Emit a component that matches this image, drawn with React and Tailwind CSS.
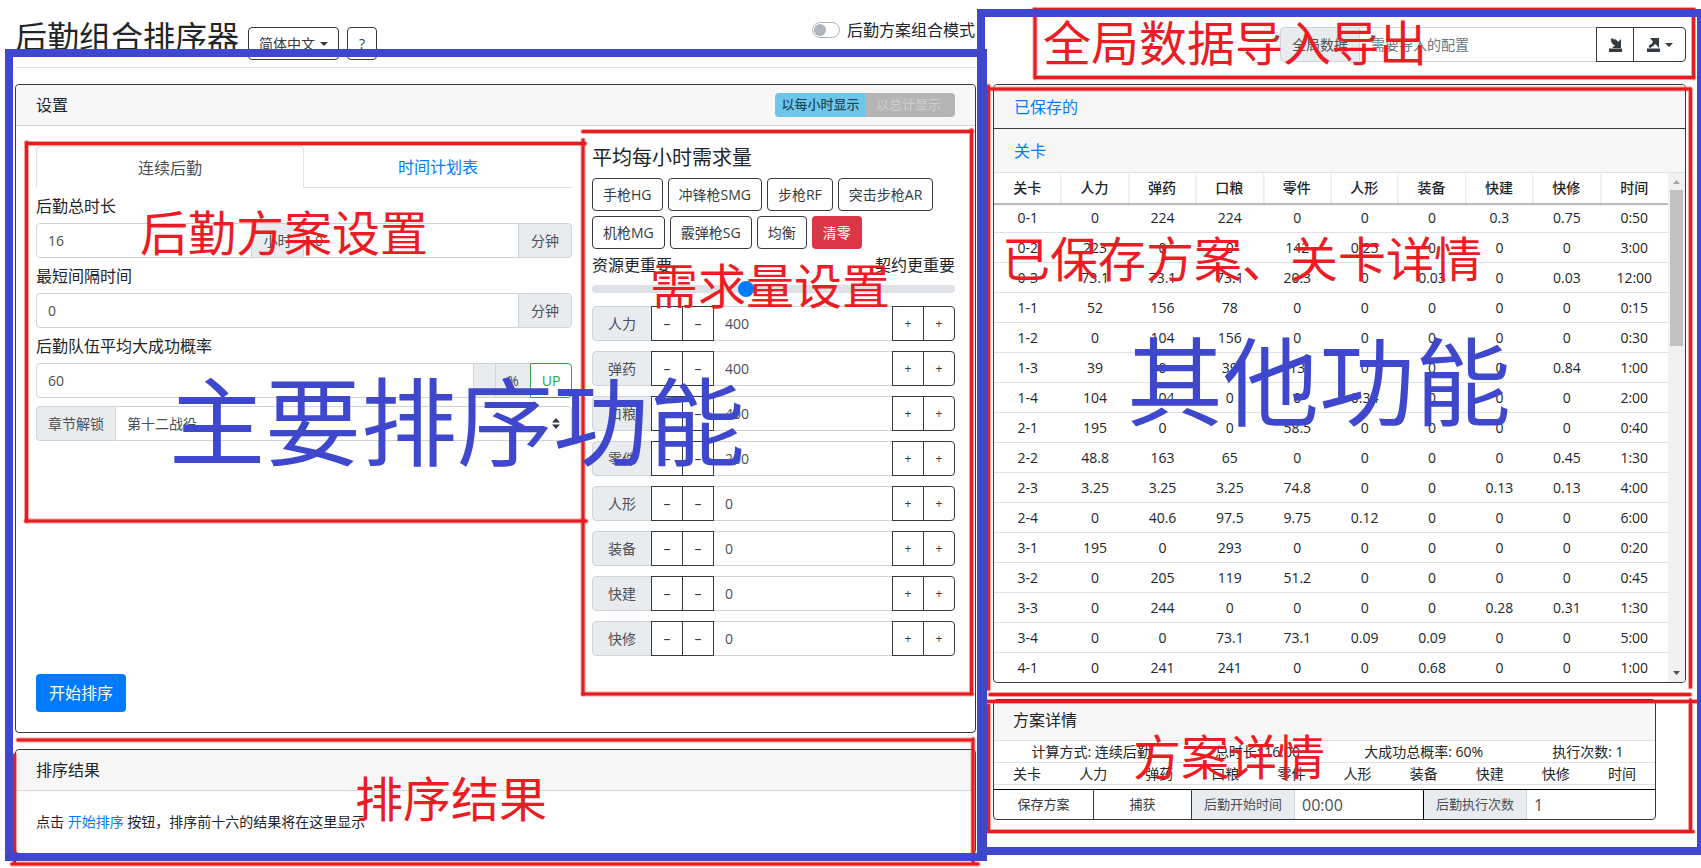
import React from "react";

const INK = "border-[#343a40]";

const demands = [
  ["人力", 400],
  ["弹药", 400],
  ["口粮", 400],
  ["零件", 200],
  ["人形", 0],
  ["装备", 0],
  ["快建", 0],
  ["快修", 0],
];

const columns = ["关卡", "人力", "弹药", "口粮", "零件", "人形", "装备", "快建", "快修", "时间"];

const stages = [
  ["0-1", "0", "224", "224", "0", "0", "0", "0.3", "0.75", "0:50"],
  ["0-2", "223", "0", "0", "142", "0.25", "0", "0", "0", "3:00"],
  ["0-3", "73.1", "73.1", "73.1", "20.3", "0", "0.03", "0", "0.03", "12:00"],
  ["1-1", "52", "156", "78", "0", "0", "0", "0", "0", "0:15"],
  ["1-2", "0", "104", "156", "0", "0", "0", "0", "0", "0:30"],
  ["1-3", "39", "0", "39", "13", "0", "0", "0", "0.84", "1:00"],
  ["1-4", "104", "104", "0", "0", "0.34", "0", "0", "0", "2:00"],
  ["2-1", "195", "0", "0", "58.5", "0", "0", "0", "0", "0:40"],
  ["2-2", "48.8", "163", "65", "0", "0", "0", "0", "0.45", "1:30"],
  ["2-3", "3.25", "3.25", "3.25", "74.8", "0", "0", "0.13", "0.13", "4:00"],
  ["2-4", "0", "40.6", "97.5", "9.75", "0.12", "0", "0", "0", "6:00"],
  ["3-1", "195", "0", "293", "0", "0", "0", "0", "0", "0:20"],
  ["3-2", "0", "205", "119", "51.2", "0", "0", "0", "0", "0:45"],
  ["3-3", "0", "244", "0", "0", "0", "0", "0.28", "0.31", "1:30"],
  ["3-4", "0", "0", "73.1", "73.1", "0.09", "0.09", "0", "0", "5:00"],
  ["4-1", "0", "241", "241", "0", "0", "0.68", "0", "0", "1:00"],
];

function Caret() {
  return (
    <svg width="8" height="4" viewBox="0 0 8 4" aria-hidden="true">
      <path d="M0 0h8L4 4z" fill="currentColor" />
    </svg>
  );
}

function Addon({ htmlFor, className = "", children }) {
  return (
    <label
      htmlFor={htmlFor}
      className={`flex shrink-0 items-center justify-center border border-[#ced4da] bg-[#e9ecef] text-sm text-[#495057] ${className}`}
    >
      {children}
    </label>
  );
}

function Field({ id, className = "", ...rest }) {
  return (
    <input
      id={id}
      className={`h-[35px] w-0 min-w-0 flex-1 border border-[#ced4da] bg-white px-[11px] text-sm text-[#495057] placeholder:text-[#6c757d] ${className}`}
      {...rest}
    />
  );
}

function OutlineButton({ className = "px-[10px]", children }) {
  return (
    <button type="button" className={`h-[33px] rounded border ${INK} text-sm text-[#343a40] ${className}`}>
      {children}
    </button>
  );
}

function StepButton({ label, className = "", children }) {
  return (
    <button type="button" aria-label={label} className={`w-8 shrink-0 border ${INK} bg-white text-[#343a40] ${className}`}>
      {children}
    </button>
  );
}

function PageHeader() {
  return (
    <header className="flex h-[68px] justify-between border-b border-[#e5e5e5]">
      <div className="flex items-start gap-[9px] pt-[18px]">
        <h1 className="text-[32px] leading-[38px] text-[#212529]">后勤组合排序器</h1>
        <div className="flex gap-2 pt-[9px]">
          <OutlineButton className="flex items-center gap-[5px] px-[10px]">
            简体中文
            <Caret />
          </OutlineButton>
          <OutlineButton className="px-[11px]">?</OutlineButton>
        </div>
      </div>
      <label className="mt-[18px] flex h-6 items-center gap-[7px] self-start pr-px text-base text-[#212529]">
        <input type="checkbox" className="peer sr-only" />
        <span className="flex h-4 w-7 items-center rounded-full border border-[#adb5bd] px-px">
          <span className="size-3 rounded-full bg-[#adb5bd]" />
        </span>
        后勤方案组合模式
      </label>
    </header>
  );
}

function PlanForm() {
  return (
    <form className="flex min-w-0 flex-col justify-between" onSubmit={(e) => e.preventDefault()}>
      <div>
        <div role="tablist" className="grid h-[42px] grid-cols-2">
          <button type="button" role="tab" aria-selected="true" className="rounded-t border border-b-0 border-[#dee2e6] text-base text-[#495057]">
            连续后勤
          </button>
          <button type="button" role="tab" aria-selected="false" className="border-b border-[#dee2e6] text-base text-[#007bff]">
            时间计划表
          </button>
        </div>

        <label htmlFor="hours" className="mt-[6px] mb-[5px] block leading-6">后勤总时长</label>
        <div className="flex">
          <Field id="hours" defaultValue="16" className="rounded-l" />
          <Addon htmlFor="hours" className="-ml-px w-[53px]">小时</Addon>
          <Field id="minutes" aria-label="分钟" defaultValue="0" className="-ml-px" />
          <Addon htmlFor="minutes" className="-ml-px w-[54px] rounded-r">分钟</Addon>
        </div>

        <label htmlFor="interval" className="mt-[6px] mb-[5px] block leading-6">最短间隔时间</label>
        <div className="flex">
          <Field id="interval" defaultValue="0" className="rounded-l" />
          <Addon htmlFor="interval" className="-ml-px w-[54px] rounded-r">分钟</Addon>
        </div>

        <label htmlFor="rate" className="mt-[6px] mb-[5px] block leading-6">后勤队伍平均大成功概率</label>
        <div className="flex">
          <Field id="rate" defaultValue="60" className="rounded-l" />
          <span className="-ml-px w-[23px] border border-[#ced4da] bg-[#e9ecef]" />
          <Addon htmlFor="rate" className="-ml-px w-9">%</Addon>
          <button type="button" className="-ml-px w-[42px] rounded-r border border-[#28a745] bg-white text-sm text-[#28a745]">UP</button>
        </div>

        <div className="mt-2 flex">
          <Addon htmlFor="chapter" className="w-20 rounded-l">章节解锁</Addon>
          <div className="relative -ml-px flex-1">
            <select id="chapter" className="h-[35px] w-full appearance-none rounded-r border border-[#ced4da] bg-white px-[11px] text-sm text-[#495057]">
              <option>第十二战役</option>
            </select>
            <svg className="pointer-events-none absolute right-3 top-3" width="8" height="11" viewBox="0 0 8 11" aria-hidden="true">
              <path d="M0 4.5 4 0l4 4.5zM0 6.5 4 11l4-4.500z" fill="#343a40" />
            </svg>
          </div>
        </div>
      </div>
      <button type="button" className="h-[38px] self-start rounded bg-[#007bff] px-[13px] text-base text-white">开始排序</button>
    </form>
  );
}

function DemandForm() {
  return (
    <form className="min-w-0" onSubmit={(e) => e.preventDefault()}>
      <h2 className="mb-2 text-xl leading-6">平均每小时需求量</h2>
      <div className="flex flex-wrap gap-[5px]">
        {["手枪HG", "冲锋枪SMG", "步枪RF", "突击步枪AR", "机枪MG", "霰弹枪SG", "均衡"].map((name) => (
          <OutlineButton key={name}>{name}</OutlineButton>
        ))}
        <button type="button" className="h-[33px] rounded bg-[#dc3545] px-[11px] text-sm text-white">清零</button>
      </div>
      <div className="mt-1 flex justify-between leading-6">
        <label htmlFor="priority">资源更重要</label>
        <span>契约更重要</span>
      </div>
      <input
        id="priority"
        type="range"
        min="0"
        max="100"
        defaultValue="42"
        className="block h-6 w-full appearance-none bg-transparent [&::-webkit-slider-runnable-track]:h-2 [&::-webkit-slider-runnable-track]:rounded-full [&::-webkit-slider-runnable-track]:bg-[#dee2e6] [&::-webkit-slider-thumb]:-mt-1 [&::-webkit-slider-thumb]:size-4 [&::-webkit-slider-thumb]:appearance-none [&::-webkit-slider-thumb]:rounded-full [&::-webkit-slider-thumb]:bg-[#007bff]"
      />
      <div className="mt-[5px] flex flex-col gap-[10px]">
        {demands.map(([name, value], i) => (
          <div key={name} className="flex">
            <Addon htmlFor={`demand-${i}`} className="w-[60px] rounded-l">{name}</Addon>
            <StepButton label={`${name} 大减`} className="-ml-px text-sm">–</StepButton>
            <StepButton label={`${name} 减`} className="-ml-px text-sm">–</StepButton>
            <Field id={`demand-${i}`} defaultValue={value} className="border-x-0" />
            <StepButton label={`${name} 加`} className="text-xs">+</StepButton>
            <StepButton label={`${name} 大加`} className="-ml-px rounded-r text-xs">+</StepButton>
          </div>
        ))}
      </div>
    </form>
  );
}

function SettingsCard() {
  return (
    <section className={`mt-4 rounded border ${INK}`}>
      <div className="flex h-[41px] items-center justify-between rounded-t border-b border-[#d5d6d7] bg-[#f7f7f7] px-5">
        <h2>设置</h2>
        <div className="flex h-6 overflow-hidden rounded text-[13px]">
          <button type="button" className="w-[91px] bg-[#6fc6eb] font-medium text-[#1e4a5c]">以每小时显示</button>
          <button type="button" className="w-[89px] bg-[#b5b5b5] pr-1 text-[#cfcfcf]">以总计显示</button>
        </div>
      </div>
      <div className="grid min-h-[606px] grid-cols-[536fr_363fr] gap-5 p-5">
        <PlanForm />
        <DemandForm />
      </div>
    </section>
  );
}

function ResultsCard() {
  return (
    <section className={`mt-4 rounded border ${INK}`}>
      <h2 className="flex h-[41px] items-center rounded-t border-b border-[#d5d6d7] bg-[#f7f7f7] px-5">排序结果</h2>
      <p className="px-5 py-5 text-sm leading-[22px]">
        点击 <a href="#sort" className="text-[#007bff]">开始排序</a> 按钮，排序前十六的结果将在这里显示
      </p>
    </section>
  );
}

function GlobalData() {
  return (
    <div className="mt-[27px] ml-auto flex w-[406px] max-w-full">
      <Addon htmlFor="config" className="w-20 rounded-l">全局数据</Addon>
      <Field id="config" placeholder="需要导入的配置" className="-ml-px border-r-0" />
      <button type="button" aria-label="导入" className={`flex w-[38px] items-center justify-center border ${INK} text-[#343a40]`}>
        <svg width="13" height="14" viewBox="0 0 13 14" fill="currentColor" aria-hidden="true">
          <path d="M0 10.500h13V14H0zM12 1v9H3l3-2.800-2-.7-2-3 .5-.8L1.500 2 3 0l2 1.500 1.500-.3 2 1.800.5 1z" />
        </svg>
      </button>
      <button type="button" aria-label="导出" className={`-ml-px flex w-[53px] items-center justify-center gap-[5px] rounded-r border ${INK} text-[#343a40]`}>
        <svg width="13" height="14" viewBox="0 0 13 14" fill="currentColor" aria-hidden="true">
          <path d="M0 10.500h13V14H0zM3 0h9v10L9.500 7 8 6 6.500 8l-1.500.5L3.500 10 1.500 9l1-2L5 5.500 6 3.500z" />
        </svg>
        <Caret />
      </button>
    </div>
  );
}

function StagesCard() {
  return (
    <section className={`mt-[22px] overflow-hidden rounded border ${INK}`}>
      <h2 className={`flex h-11 items-center border-b ${INK} bg-[#f7f7f7] px-5`}>
        <a href="#saved" className="text-[#007bff]">已保存的</a>
      </h2>
      <h2 className="flex h-11 items-center border-b border-[#dee2e6] bg-[#f7f7f7] px-5">
        <a href="#stages" className="text-[#007bff]">关卡</a>
      </h2>
      <div className="flex">
        <div className="min-w-0 flex-1">
          <table className="w-full table-fixed border-separate border-spacing-0 text-center text-sm">
            <thead>
              <tr className="h-[30px]">
                {columns.map((c) => (
                  <th key={c} className="border-r border-[#f8f8f8] p-0 font-medium shadow-[0_2px_1px_rgba(52,58,64,0.35)] last:border-r-0">{c}</th>
                ))}
              </tr>
            </thead>
            <tbody className="[&>tr:last-child]:h-[29px] [&>tr:last-child>td]:border-b-0">
              {stages.map((row) => (
                <tr key={row[0]} className="h-[30px]">
                  {row.map((v, i) => (
                    <td key={i} className="border-b border-[#dee2e6] p-0">{v}</td>
                  ))}
                </tr>
              ))}
            </tbody>
          </table>
        </div>
        <div className="flex w-[17px] flex-col items-center bg-[#f1f1f1]" aria-hidden="true">
          <svg width="17" height="17" viewBox="0 0 17 17"><path d="M5 11h7L8.500 7z" fill="#a3a3a3" /></svg>
          <div className="h-[156px] w-[13px] bg-[#c1c1c1]" />
          <svg className="mt-auto" width="17" height="17" viewBox="0 0 17 17"><path d="M5 6h7L8.500 10z" fill="#505050" /></svg>
        </div>
      </div>
    </section>
  );
}

function DetailCard() {
  return (
    <section className={`mt-4 mr-[30px] overflow-hidden rounded border ${INK}`}>
      <h2 className="flex h-[41px] items-center border-b border-[#dee2e6] bg-[#f7f7f7] px-[19px]">方案详情</h2>
      <div className="grid h-[22px] grid-cols-[194fr_138fr_194fr_134fr] items-center border-b border-[#dee2e6] text-center text-sm">
        <span>计算方式: 连续后勤</span>
        <span>总时长: 16:00</span>
        <span>大成功总概率: 60%</span>
        <span>执行次数: 1</span>
      </div>
      <div className="grid h-[22px] grid-cols-10 items-center border-b border-[#dee2e6] text-center text-sm">
        {columns.map((c) => (
          <span key={c}>{c}</span>
        ))}
      </div>
      <div className="mt-1 flex h-[30px] border-t border-black">
        <button type="button" className={`w-[100px] border-r ${INK} text-[13px] text-[#343a40]`}>保存方案</button>
        <button type="button" className={`w-[98px] border-r ${INK} text-[13px] text-[#343a40]`}>捕获</button>
        <label htmlFor="start" className="flex w-[103px] items-center justify-center border-r border-[#ced4da] bg-[#e9ecef] text-[13px] text-[#495057]">后勤开始时间</label>
        <input id="start" defaultValue="00:00" className="min-w-0 flex-1 border-r border-black px-[7px] text-base text-[#495057]" />
        <label htmlFor="runs" className="flex w-[103px] items-center justify-center border-r border-[#ced4da] bg-[#e9ecef] text-[13px] text-[#495057]">后勤执行次数</label>
        <input id="runs" defaultValue="1" className="min-w-0 flex-1 px-[7px] text-base text-[#495057]" />
      </div>
    </section>
  );
}

const redLines = [
  "M26.500 142.500V521",
  "M27 143.500H585",
  "M26 521H586",
  "M583 140V694",
  "M583 131.500H972",
  "M971.500 130V693",
  "M583 694H972",
  "M1035 9V78M1034 9.500H1694M1693.500 10V78M1035 77.500H1694",
  "M988.500 86V689M988 89H1690M1690.500 89V687M990 694.500H1690",
  "M988.500 705V831M987 701.500H1696M1690.500 700V831M987 831.500H1693",
  "M14.500 755V862M18 740H973M973 739V862M12 864H978",
];

const notes = [
  ["后勤方案设置", "left-[140px] top-[209px]"],
  ["需求量设置", "left-[650px] top-[262px]"],
  ["全局数据导入导出", "left-[1043px] top-[19px]"],
  ["已保存方案、关卡详情", "left-[1002px] top-[235px]"],
  ["方案详情", "left-[1133px] top-[733px]"],
  ["排序结果", "left-[355px] top-[775px]"],
];

function Annotations() {
  return (
    <div className="pointer-events-none absolute inset-0 overflow-hidden whitespace-nowrap">
      <svg className="absolute left-0 top-0" width="1701" height="868" viewBox="0 0 1701 868" fill="none" aria-hidden="true">
        <g stroke="#e81c1c" strokeLinecap="round">
          {redLines.map((d) => (
            <g key={d}>
              <path d={d} strokeWidth="5" opacity="0.4" />
              <path d={d} strokeWidth="3" />
            </g>
          ))}
        </g>
        <g stroke="#3f48cc" strokeWidth="8">
          <path d="M9 53H983V857H9z" />
          <path d="M981 13H1701V851H981z" />
        </g>
      </svg>
      {notes.map(([text, place]) => (
        <p key={text} className={`absolute text-5xl leading-none text-[#ed1c24] ${place}`}>{text}</p>
      ))}
      <p className="absolute left-[169px] top-[373px] text-8xl leading-none text-[#3f48cc]">主要排序功能</p>
      <p className="absolute left-[1127px] top-[333px] text-8xl leading-none text-[#3f48cc]">其他功能</p>
    </div>
  );
}

export default function App() {
  return (
    <div className="relative min-h-screen overflow-hidden bg-white font-['Open_Sans','Noto_Sans_CJK_SC',sans-serif] text-base text-[#212529]">
      <div className="grid grid-cols-[961fr_693fr] gap-[17px] px-[15px]">
        <main className="min-w-0">
          <PageHeader />
          <SettingsCard />
          <ResultsCard />
        </main>
        <aside className="min-w-0">
          <GlobalData />
          <StagesCard />
          <DetailCard />
        </aside>
      </div>
      <Annotations />
    </div>
  );
}
